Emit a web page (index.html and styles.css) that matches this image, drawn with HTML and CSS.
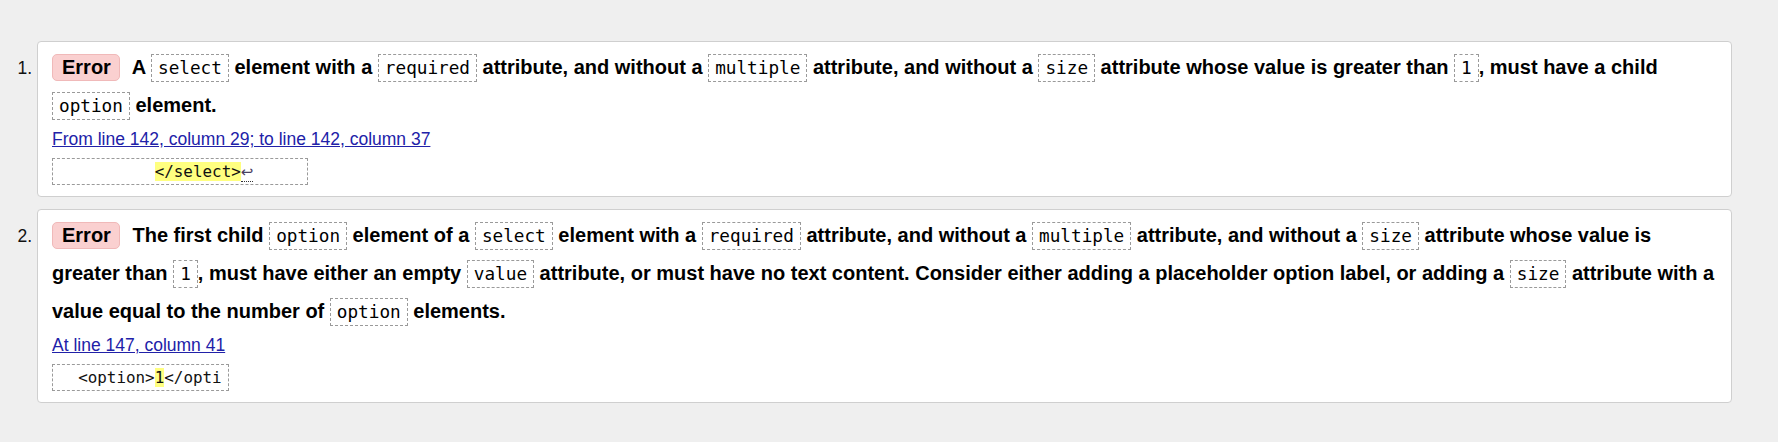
FILE: index.html
```html
<!DOCTYPE html>
<html lang="en">
<head>
<meta charset="utf-8">
<title>Validation messages</title>
<link rel="stylesheet" href="styles.css">
</head>
<body>
<ol class="messages">
  <li class="msg">
    <p class="text"><strong class="badge">Error</strong> A <code>select</code> element with a <code>required</code> attribute, and without a <code>multiple</code> attribute, and without a <code>size</code> attribute whose value is greater than <code>1</code>, must have a child <code>option</code> element.</p>
    <p class="location"><a href="#l142">From line 142, column 29; to line 142, column 37</a></p>
    <p class="extract"><code class="snippet">          <b class="hl">&lt;/select&gt;</b><span class="lf">↩</span>     </code></p>
  </li>
  <li class="msg">
    <p class="text"><strong class="badge">Error</strong> The first child <code>option</code> element of a <code>select</code> element with a <code>required</code> attribute, and without a <code>multiple</code> attribute, and without a <code>size</code> attribute whose value is greater than <code>1</code>, must have either an empty <code>value</code> attribute, or must have no text content. Consider either adding a placeholder option label, or adding a <code>size</code> attribute with a value equal to the number of <code>option</code> elements.</p>
    <p class="location"><a href="#l147">At line 147, column 41</a></p>
    <p class="extract"><code class="snippet">  &lt;option&gt;<b class="hl">1</b>&lt;/opti</code></p>
  </li>
</ol>
</body>
</html>
```
FILE: styles.css
```css
html, body {
  margin: 0;
  padding: 0;
}

body {
  background: #efefef;
  font-family: "Liberation Sans", Arial, sans-serif;
  color: #000;
}

.messages {
  margin: 41px 46px 0 0;
  padding: 0 0 0 37px;
  font-size: 17.5px;
  color: #111;
}

.msg {
  background: #fff;
  border: 1px solid #cfcfcf;
  border-radius: 4px;
  padding: 7px 14px 11px;
  margin-bottom: 12px;
}

.text {
  margin: 0;
  font-size: 20px;
  font-weight: bold;
  line-height: 37px;
  color: #000;
}

.badge {
  display: inline-block;
  background: #fad0d0;
  border: 1px solid #f0b9b9;
  border-radius: 5px;
  padding: 1px 8px 1px 9px;
  line-height: 23px;
  margin-right: 7px;
  font-weight: bold;
}

.text code {
  font-family: "DejaVu Sans Mono", "Liberation Mono", monospace;
  font-size: 17.7px;
  font-weight: normal;
  border: 1px dashed #9a9a9a;
  padding: 3px 6px;
}

.location {
  margin: 4px 0 0;
  line-height: 21px;
  font-size: 17.5px;
}

.location a {
  color: #2121a8;
  text-decoration: underline;
}

.extract {
  display: flex;
  margin: 8px 0 0;
}

.snippet {
  display: block;
  font-family: "DejaVu Sans Mono", "Liberation Mono", monospace;
  font-size: 15.9px;
  line-height: 21px;
  height: 21px;
  white-space: pre;
  border: 1px dashed #9a9a9a;
  padding: 2px 6px;
  color: #111;
}

.hl {
  background: #ffff80;
  font-weight: normal;
}

.lf {
  font-family: "DejaVu Sans", sans-serif;
  font-size: 15px;
  color: #4a4060;
  border-bottom: 1px dotted #333;
}
```
